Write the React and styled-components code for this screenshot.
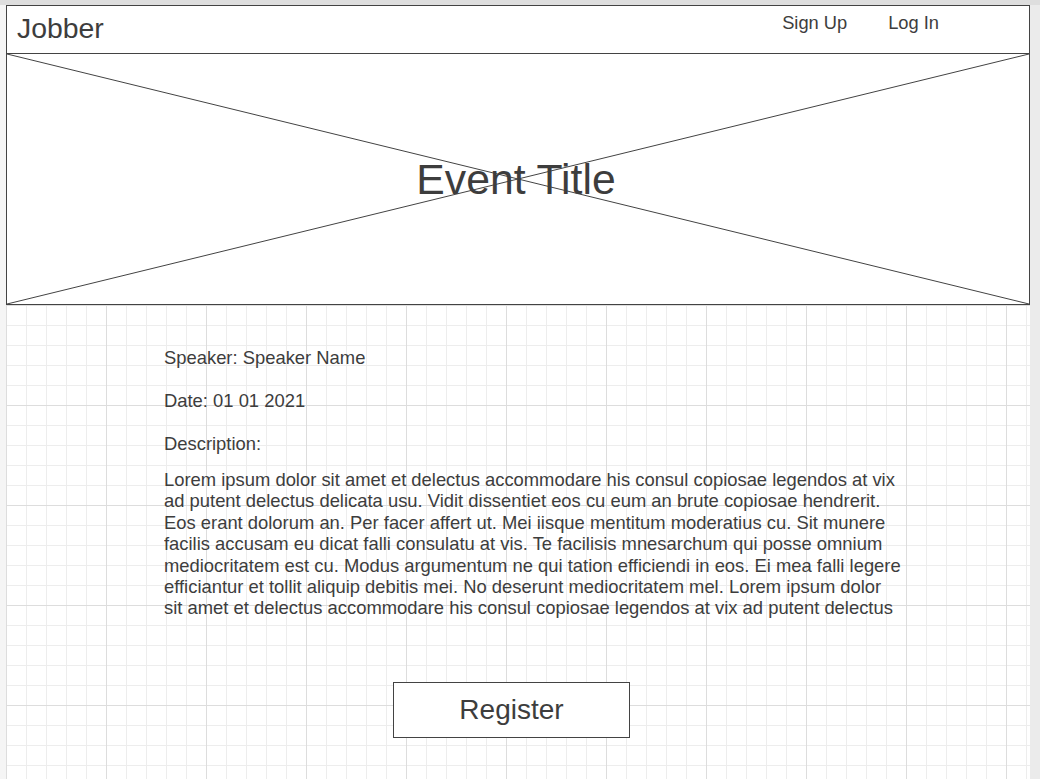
import React from "react";
import styled, { createGlobalStyle } from "styled-components";

const ink = "#3d3d3d";
const line = "#434343";

const GlobalStyle = createGlobalStyle`
  html, body {
    margin: 0;
    padding: 0;
    background: #ebebeb;
  }
  body {
    font-family: "Liberation Sans", Arial, sans-serif;
    color: ${ink};
  }
`;

const Page = styled.div`
  display: flex;
  min-height: 100vh;
  border-top: 5px solid #dedede;
  box-sizing: border-box;
`;

const Gutter = styled.div`
  width: 6px;
  flex-shrink: 0;
  background: #f5f5f5;
`;

const Canvas = styled.main`
  width: 1024px;
  flex-shrink: 0;
  display: flex;
  flex-direction: column;
  background-color: #fff;
  background-image: linear-gradient(to right, #dddddd 1px, transparent 1px),
    linear-gradient(to bottom, #dddddd 1px, transparent 1px),
    linear-gradient(to right, #ededed 1px, transparent 1px),
    linear-gradient(to bottom, #ededed 1px, transparent 1px);
  background-size: 100px 100px, 100px 100px, 20px 20px, 20px 20px;
`;

const Header = styled.header`
  height: 49px;
  box-sizing: border-box;
  border: 1px solid ${line};
  background: #fff;
  display: flex;
  justify-content: space-between;
  align-items: flex-start;
  padding-left: 10px;
`;

const Brand = styled.div`
  font-size: 28.4px;
  line-height: 32px;
  margin-top: 6px;
`;

const Nav = styled.nav`
  display: flex;
  gap: 41px;
  margin-top: 6px;
  margin-right: 90px;
`;

const NavLink = styled.a`
  font-size: 18.3px;
  line-height: 21px;
  color: ${ink};
  text-decoration: none;
  cursor: pointer;
`;

const Hero = styled.section`
  position: relative;
  height: 251px;
  box-sizing: border-box;
  border: 1px solid ${line};
  border-top: none;
  background: #fff;
  display: flex;
  align-items: center;
  justify-content: center;
`;

const Cross = styled.svg`
  position: absolute;
  inset: 0;
  width: 100%;
  height: 100%;
`;

const Title = styled.h1`
  position: relative;
  margin: 0 4px 1px 0;
  font-size: 42.7px;
  font-weight: normal;
  line-height: 48px;
`;

const Details = styled.section`
  padding: 42px 0 0 158px;
  display: flex;
  flex-direction: column;
  gap: 22px;
`;

const Field = styled.div`
  font-size: 18.4px;
  line-height: 21px;
`;

const Description = styled.p`
  margin: -7px 0 0 0;
  width: 738px;
  height: 150px;
  overflow: hidden;
  font-size: 18.4px;
  line-height: 21.4px;
`;

const Actions = styled.div`
  padding: 63px 0 0 387px;
`;

const RegisterButton = styled.button`
  width: 237px;
  height: 56px;
  box-sizing: border-box;
  border: 1px solid ${line};
  background: #fff;
  color: ${ink};
  font-family: inherit;
  font-size: 28px;
  cursor: pointer;
  padding: 0;
`;

const lorem =
  "Lorem ipsum dolor sit amet et delectus accommodare his consul copiosae legendos at vix ad putent delectus delicata usu. Vidit dissentiet eos cu eum an brute copiosae hendrerit. Eos erant dolorum an. Per facer affert ut. Mei iisque mentitum moderatius cu. Sit munere facilis accusam eu dicat falli consulatu at vis. Te facilisis mnesarchum qui posse omnium mediocritatem est cu. Modus argumentum ne qui tation efficiendi in eos. Ei mea falli legere efficiantur et tollit aliquip debitis mei. No deserunt mediocritatem mel. Lorem ipsum dolor sit amet et delectus accommodare his consul copiosae legendos at vix ad putent delectus";

export default function App() {
  return (
    <>
      <GlobalStyle />
      <Page>
        <Gutter />
        <Canvas>
          <Header>
            <Brand>Jobber</Brand>
            <Nav>
              <NavLink>Sign Up</NavLink>
              <NavLink>Log In</NavLink>
            </Nav>
          </Header>
          <Hero>
            <Cross viewBox="0 0 100 100" preserveAspectRatio="none">
              <line x1="0" y1="0" x2="100" y2="100" stroke={line} strokeWidth="1" vectorEffect="non-scaling-stroke" />
              <line x1="100" y1="0" x2="0" y2="100" stroke={line} strokeWidth="1" vectorEffect="non-scaling-stroke" />
            </Cross>
            <Title>Event Title</Title>
          </Hero>
          <Details>
            <Field>Speaker: Speaker Name</Field>
            <Field>Date: 01 01 2021</Field>
            <Field>Description:</Field>
            <Description>{lorem}</Description>
          </Details>
          <Actions>
            <RegisterButton>Register</RegisterButton>
          </Actions>
        </Canvas>
      </Page>
    </>
  );
}
